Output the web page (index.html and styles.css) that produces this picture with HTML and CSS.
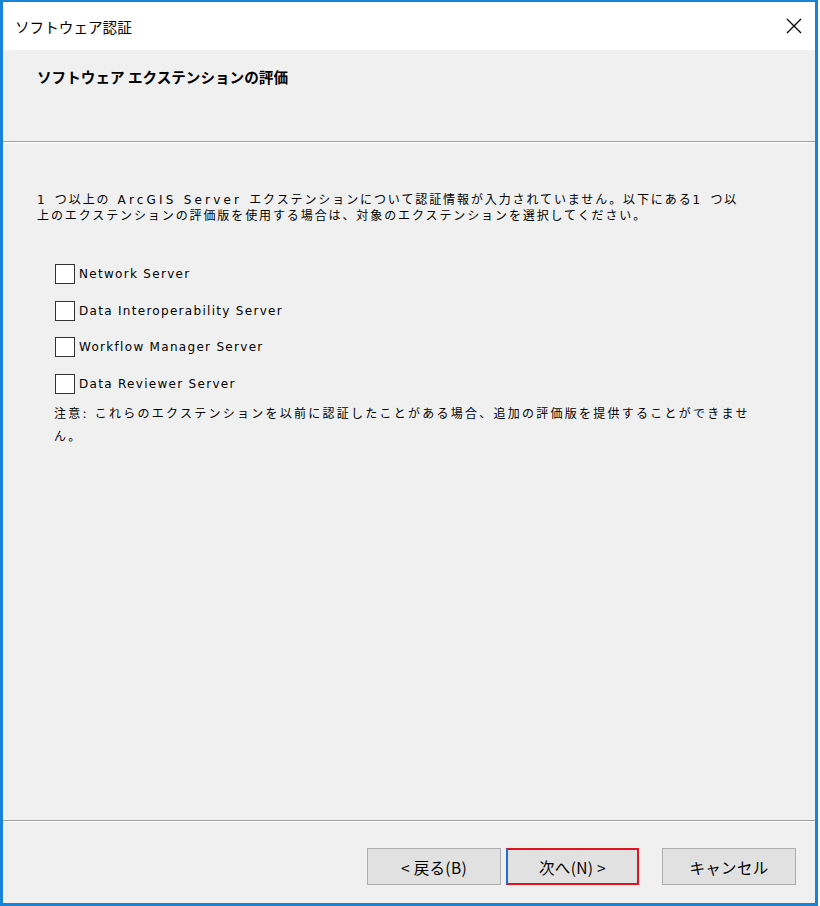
FILE: index.html
```html
<!DOCTYPE html>
<html lang="ja">
<head>
	<meta charset="UTF-8">
	<title>ソフトウェア認証</title>
	<link rel="stylesheet" href="styles.css">
</head>
<body>
	<div class="window">
		<div class="titlebar">
			<span class="title">ソフトウェア認証</span>
			<span class="close">
				<svg width="16" height="16" viewBox="0 0 16 16"><path d="M1 1L15 15M15 1L1 15" stroke="#000" stroke-width="1.3" fill="none"/></svg>
			</span>
		</div>
		<div class="header">
			<h1>ソフトウェア エクステンションの評価</h1>
		</div>
		<div class="rule"></div>
		<div class="content">
			<p class="intro"><span class="en">1 </span>つ以上の<span class="en"> ArcGIS Server </span>エクステンションについて認証情報が入力されていません。以下にある<span class="en">1 </span>つ以<br>上のエクステンションの評価版を使用する場合は、対象のエクステンションを選択してください。</p>
			<ul class="options">
				<li><span class="check"></span>Network Server</li>
				<li><span class="check"></span>Data Interoperability Server</li>
				<li><span class="check"></span>Workflow Manager Server</li>
				<li><span class="check"></span>Data Reviewer Server</li>
			</ul>
			<p class="note">注意: これらのエクステンションを以前に認証したことがある場合、追加の評価版を提供することができませ<br>ん。</p>
		</div>
		<div class="rule"></div>
		<div class="footer">
			<button class="btn">&lt; 戻る(B)</button>
			<button class="btn next">次へ(N) &gt;</button>
			<button class="btn cancel">キャンセル</button>
		</div>
	</div>
</body>
</html>
```

FILE: styles.css
```css
*{margin:0;padding:0;box-sizing:border-box;}
body{background:#fff;font-family:"Noto Sans CJK JP","Liberation Sans",sans-serif;color:#000;}
li{list-style:none;}

.window{width:818px;height:906px;border:3px solid #1883d7;border-top-width:2px;background:#f0f0f0;display:flex;flex-direction:column;}

/*タイトルバー*/
.titlebar{height:48px;background:#fff;display:flex;align-items:center;justify-content:space-between;padding:0 13px 0 12px;}
.title{font-size:14.6px;}
.close{display:flex;width:16px;height:16px;}

.header{height:91px;padding:16px 34px;}
.header h1{font-size:14.6px;font-weight:bold;}

.rule{border-top:1px solid #a0a0a0;border-bottom:1px solid #fff;}

/*本文は欧文を幅の広いDejaVuにする*/
.content{flex:1;padding:49px 34px 0;font-size:12px;font-family:"DejaVu Sans","Noto Sans CJK JP",sans-serif;}
.intro{line-height:16px;letter-spacing:1.9px;}
.intro .en{letter-spacing:3.2px;font-weight:normal;}
.options{margin-top:40px;padding-left:18px;}
.options li{display:flex;align-items:center;height:20px;margin-bottom:16.5px;font-size:12px;letter-spacing:1.3px;}
.check{width:20px;height:20px;border:1px solid #333;background:#fff;margin-right:4px;}
.note{margin-top:-7px;padding-left:17px;line-height:23px;letter-spacing:2.25px;}

.footer{height:81px;display:flex;justify-content:flex-end;align-items:flex-start;padding:26px 19px 0 0;gap:5px;}
.btn{width:134px;height:37px;background:#e1e1e1;border:1px solid #adadad;font-family:inherit;font-size:15.5px;letter-spacing:0.3px;color:#000;}
.next{width:133px;border:2px solid #e0141e;border-left-color:#1e6fd0;margin-right:18px;}
```
